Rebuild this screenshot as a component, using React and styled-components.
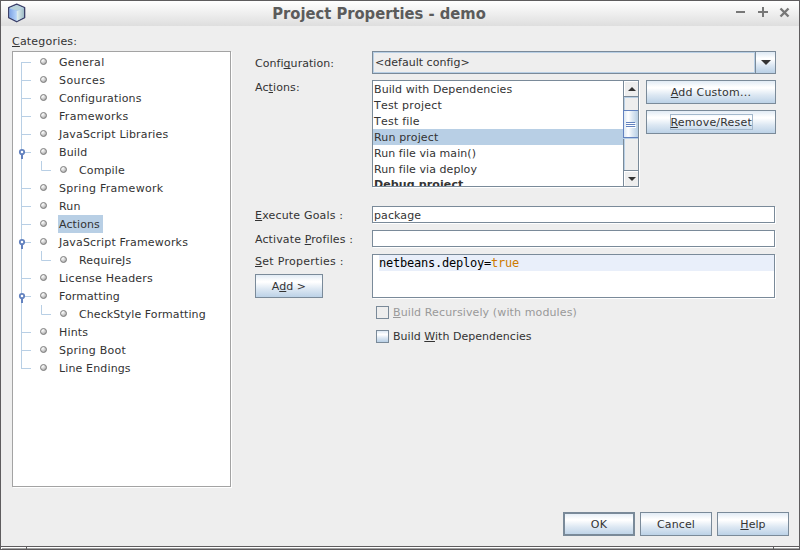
import React from "react";
import styled, { createGlobalStyle, css } from "styled-components";

const steel = "#7a8a99";
const sky = "#b8cfe5";
const oceanGradient = "linear-gradient(#dde8f3 0%, #ffffff 30%, #ffffff 34%, #dde8f3 62%, #b8cfe5 100%)";

const GlobalStyle = createGlobalStyle`
  * { box-sizing: border-box; }
  body { margin: 0; background: #eeeeee; }
`;

const Window = styled.div`
  width: 800px;
  height: 550px;
  display: flex;
  flex-direction: column;
  background: #eeeeee;
  color: #333333;
  font: 11px/16px "DejaVu Sans", sans-serif;
  border: solid #5e5c5e;
  border-width: 1px 1px 0;
  overflow: hidden;
  white-space: nowrap;
`;

const TitleBar = styled.header`
  height: 25px;
  flex: none;
  display: grid;
  grid-template-columns: 60px 1fr 63px;
  align-items: center;
  background: linear-gradient(#ffffff, #dedede);
`;

const AppIcon = styled.svg`
  display: block;
  margin: -1px 0 0 6px;
`;

const Title = styled.h1`
  margin: 0 0 0 -39px;
  justify-self: center;
  color: #5b5b5b;
  font: bold 16.4px/22px "DejaVu Sans Condensed", "DejaVu Sans", sans-serif;
  font-stretch: condensed;
`;

const WindowControls = styled.svg`
  display: block;
`;

const Body = styled.main`
  flex: 1;
  display: grid;
  grid-template-columns: 219px 521px;
  column-gap: 24px;
  padding: 8px 0 0 11px;
`;

const Sidebar = styled.section`
  display: flex;
  flex-direction: column;
`;

const Text = styled.span`
  letter-spacing: ${(p) => p.$track ?? 0.2}px;
`;

const Mnemonic = styled.u`
  text-decoration-thickness: 1px;
  text-underline-offset: 1px;
  text-decoration-skip-ink: none;
`;

const TreeBox = styled.div`
  margin-top: 1px;
  height: 436px;
  border: 1px solid #a3a3a3;
  box-shadow: 1px 1px 0 #ffffff;
  background: #ffffff;
  padding-top: 1px;
`;

const TreeRow = styled.div`
  display: flex;
  height: 18px;
`;

const Branch = styled.svg`
  display: block;
  flex: none;
`;

const TreeLabel = styled.span`
  height: 18px;
  line-height: 17px;
  padding: 1px 3px 0 1px;
  letter-spacing: ${(p) => p.$track - 0.04}px;
  background: ${(p) => (p.$selected ? sky : "transparent")};
`;

const Form = styled.section`
  display: flex;
  flex-direction: column;
  padding-top: 17px;
`;

const FormRow = styled.div`
  display: grid;
  grid-template-columns: 117px 1fr;
  align-items: start;
  height: ${(p) => p.$height}px;
`;

const FieldLabel = styled.label`
  padding-top: ${(p) => p.$drop ?? 0}px;
  letter-spacing: ${(p) => p.$track}px;
`;

const LabelStack = styled.div`
  display: flex;
  flex-direction: column;
  align-items: flex-start;
`;

const Combo = styled.div`
  width: 404px;
  height: 23px;
  display: flex;
  border: 1px solid ${steel};
`;

const ComboValue = styled.div`
  flex: 1;
  border: 1px solid ${sky};
  padding-left: 1px;
  line-height: 19px;
  letter-spacing: 0.02px;
`;

const ComboArrow = styled.div`
  width: 20px;
  border-left: 1px solid ${steel};
  background: ${oceanGradient};
  display: grid;
  place-items: center;
`;

const ListArea = styled.div`
  display: flex;
  gap: 7px;
`;

const ListBox = styled.div`
  width: 267px;
  height: 107px;
  border: 1px solid ${steel};
  box-shadow: 1px 1px 0 #ffffff;
  background: #ffffff;
  display: flex;
  overflow: hidden;
`;

const ListItems = styled.div`
  flex: 1;
  overflow: hidden;
`;

const ListItem = styled.div`
  height: 16px;
  padding: 1px 0 0 1px;
  letter-spacing: ${(p) => p.$track - 0.03}px;
  ${(p) => p.$selected && css`background: ${sky};`}
  ${(p) => p.$bold && css`font-weight: bold; padding-top: 0;`}
  ${(p) => p.$loose && css`font-kerning: none;`}
`;

const ScrollBar = styled.div`
  width: 15px;
  border-left: 1px solid ${steel};
  display: flex;
  flex-direction: column;
`;

const ScrollButton = styled.div`
  height: 15px;
  background: #eeeeee;
  border: solid #ffffff;
  border-width: 1px 0 0 1px;
  display: grid;
  place-items: center;
`;

const ScrollTrack = styled.div`
  height: 75px;
  border: solid ${steel};
  border-width: 1px 0;
  background: #eeeeee;
  box-shadow: inset 1px 1px 0 ${sky};
  padding-top: 13px;
`;

const ScrollThumb = styled.div`
  height: 28px;
  border: solid #6382bf;
  border-width: 1px 0 1px 1px;
  margin-left: -1px;
  background: linear-gradient(90deg, #dde8f3, #ffffff 30%, #dde8f3 60%, #b8cfe5);
  display: grid;
  place-items: center;
  box-shadow: 0 1px 0 ${sky};
`;

const ButtonColumn = styled.div`
  display: flex;
  flex-direction: column;
  gap: 6px;
`;

const Button = styled.button`
  width: ${(p) => p.$width}px;
  height: 24px;
  margin: ${(p) => p.$margin ?? 0};
  padding: ${(p) => (p.$flush ? 0 : 1)}px 0 0;
  border: ${(p) => (p.$primary ? 2 : 1)}px solid ${steel};
  background: ${oceanGradient};
  background-origin: border-box;
  color: #333333;
  font: inherit;
  letter-spacing: ${(p) => p.$track ?? 0.2}px;
  display: flex;
  align-items: center;
  justify-content: center;
`;

const FocusRing = styled.span`
  height: 16px;
  width: 83px;
  border: 1px solid #a3b8cc;
  line-height: 15px;
`;

const Input = styled.div`
  width: 403px;
  height: 17px;
  border: 1px solid ${steel};
  box-shadow: 1px 1px 0 #ffffff;
  background: #ffffff;
  padding-left: 1px;
  line-height: 17px;
  letter-spacing: 0.1px;
`;

const Editor = styled.div`
  width: 403px;
  height: 44px;
  border: 1px solid ${steel};
  box-shadow: 1px 1px 0 #ffffff;
  background: #ffffff;
  padding-left: 6px;
`;

const CodeLine = styled.div`
  height: 16px;
  background: #e9effa;
  color: #000000;
  font: 12px/16px "DejaVu Sans Mono", monospace;
  letter-spacing: -0.225px;
`;

const Value = styled.span`
  color: #ce7b00;
`;

const CheckRow = styled.label`
  display: flex;
  align-items: center;
  gap: 4px;
  height: 24px;
  padding-left: 121px;
  color: ${(p) => (p.$disabled ? "#999999" : "#333333")};
  letter-spacing: ${(p) => p.$track}px;
`;

const CheckText = styled.span`
  padding-top: 2px;
`;

const CheckBox = styled.span`
  width: 13px;
  height: 13px;
  border: 1px solid ${steel};
  background: ${(p) => (p.$disabled ? "#eeeeee" : oceanGradient)};
`;

const Footer = styled.footer`
  height: 34px;
  flex: none;
  display: flex;
  justify-content: flex-end;
  gap: 5px;
  padding-right: 10px;
`;

const ResizeEdge = styled.div`
  flex: none;
  height: 4px;
  display: grid;
  grid-template-columns: 25px 747px 1fr;
  border: solid #5e5c5e;
  border-width: 1px 0;
  background: linear-gradient(#ffffff 50%, #a2a2a2 50%);
`;

const EdgeSection = styled.span`
  border-left: 1px solid ${(p) => (p.$first ? "#ffffff" : "#5e5c5e")};
`;

const categories = [
  { name: "General", track: 0.35, first: true },
  { name: "Sources", track: 0.45 },
  { name: "Configurations", track: 0.2 },
  { name: "Frameworks", track: 0.33 },
  { name: "JavaScript Libraries", track: 0.2 },
  { name: "Build", track: 0.2, open: true },
  { name: "Compile", track: 0.16, child: true },
  { name: "Spring Framework", track: 0.32 },
  { name: "Run", track: 0.25 },
  { name: "Actions", track: 0.15, selected: true },
  { name: "JavaScript Frameworks", track: 0.22, open: true },
  { name: "RequireJs", track: 0.2, child: true },
  { name: "License Headers", track: 0.26 },
  { name: "Formatting", track: 0.12, open: true },
  { name: "CheckStyle Formatting", track: 0.12, child: true },
  { name: "Hints", track: 0.2 },
  { name: "Spring Boot", track: 0.3 },
  { name: "Line Endings", track: 0.18, last: true },
];

const actions = [
  { name: "Build with Dependencies", track: 0.12 },
  { name: "Test project", track: 0.24, loose: true },
  { name: "Test file", track: 0.26, loose: true },
  { name: "Run project", track: 0.18, selected: true },
  { name: "Run file via main()", track: 0.1 },
  { name: "Run file via deploy", track: 0.1 },
  { name: "Debug project", track: 0.15, bold: true },
];

function Connector({ item }) {
  const x = item.child ? 50.5 : 30.5;
  return (
    <Branch width={item.child ? 65 : 45} height="18" viewBox={`0 0 ${item.child ? 65 : 45} 18`}>
      <g stroke={sky} fill="none">
        <path d={`M8.5 ${item.first ? 9 : 0}V${item.last ? 10 : 18}`} />
        {item.child ? <path d="M28.5 0V9.5H38" /> : <path d="M9 9.5H18" />}
      </g>
      {item.open && (
        <g>
          <path d="M9 11V16" stroke="#6382bf" strokeWidth="2" />
          <circle cx="9" cy="9" r="2.2" fill="#ffffff" stroke="#6382bf" strokeWidth="1.8" />
        </g>
      )}
      <circle cx={x} cy="8.5" r="3" fill="url(#pearl)" stroke="#777777" strokeWidth="0.9" />
    </Branch>
  );
}

function ArrowDown({ width = 9 }) {
  return (
    <svg width={width} height={Math.ceil(width / 2)} viewBox="0 0 10 5" preserveAspectRatio="none">
      <path d="M0 0H10L5 5Z" fill="#333333" />
    </svg>
  );
}

function CubeIcon() {
  return (
    <AppIcon width="20" height="20" viewBox="0 0 20 20">
      <path d="M9.7 1.2L17.6 4.6V14.7L9.7 18.7L1.7 14.7V4.6Z" fill="#a8c6ef" stroke="#3b3f68" strokeWidth="1.4" strokeLinejoin="round" />
      <path d="M9.7 2L17 5L10 7.4L2.6 5.1Z" fill="#b9d3da" />
      <path d="M2.5 5.4L9.8 8V18L2.5 14.3Z" fill="url(#cubeLeft)" />
      <path d="M9.8 8L16.9 5.3V14.2L9.8 18Z" fill="url(#cubeRight)" />
    </AppIcon>
  );
}

export default function App() {
  return (
    <Window>
      <GlobalStyle />
      <TitleBar>
        <CubeIcon />
        <Title>Project Properties - demo</Title>
        <WindowControls width="63" height="25" viewBox="0 0 63 25">
          <g stroke="#777777" strokeWidth="2" fill="none">
            <path d="M0 11H9M22 11H32M27 6V16" />
            <path d="M44.5 7.5L52.5 15.5M52.5 7.5L44.5 15.5" strokeWidth="2.4" />
          </g>
        </WindowControls>
      </TitleBar>
      <Body>
        <Sidebar>
          <Text $track={0.2}><Mnemonic>C</Mnemonic>ategories:</Text>
          <TreeBox>
            <svg width="0" height="0" display="block">
              <defs>
                <radialGradient id="pearl" cx="35%" cy="30%" r="75%">
                  <stop offset="0" stopColor="#ffffff" />
                  <stop offset="0.5" stopColor="#d4d4d4" />
                  <stop offset="1" stopColor="#a0a0a0" />
                </radialGradient>
                <linearGradient id="cubeLeft">
                  <stop offset="0" stopColor="#7fa5e6" />
                  <stop offset="1" stopColor="#b9d6fa" />
                </linearGradient>
                <linearGradient id="cubeRight">
                  <stop offset="0" stopColor="#e3f0f0" />
                  <stop offset="1" stopColor="#9fbcc6" />
                </linearGradient>
              </defs>
            </svg>
            {categories.map((item) => (
              <TreeRow key={item.name}>
                <Connector item={item} />
                <TreeLabel $track={item.track} $selected={item.selected}>{item.name}</TreeLabel>
              </TreeRow>
            ))}
          </TreeBox>
        </Sidebar>
        <Form>
          <FormRow $height={29}>
            <FieldLabel $drop={5} $track={0.05}>Confi<Mnemonic>g</Mnemonic>uration:</FieldLabel>
            <Combo>
              <ComboValue>&lt;default config&gt;</ComboValue>
              <ComboArrow><ArrowDown width={10} /></ComboArrow>
            </Combo>
          </FormRow>
          <FormRow $height={126}>
            <FieldLabel $track={0.1}>Ac<Mnemonic>t</Mnemonic>ions:</FieldLabel>
            <ListArea>
              <ListBox>
                <ListItems>
                  {actions.map((a) => (
                    <ListItem key={a.name} $track={a.track} $selected={a.selected} $bold={a.bold} $loose={a.loose}>{a.name}</ListItem>
                  ))}
                </ListItems>
                <ScrollBar>
                  <ScrollButton>
                    <svg width="8" height="4" viewBox="0 0 8 4"><path d="M0 4H8L4 0Z" fill="#333333" /></svg>
                  </ScrollButton>
                  <ScrollTrack>
                    <ScrollThumb>
                      <svg width="10" height="7" viewBox="0 0 10 7">
                        <path d="M0 1.5H9M0 3.5H9M0 5.5H9" stroke="#6382bf" />
                        <path d="M1 2.5H10M1 4.5H10M1 6.5H10" stroke="#ffffff" />
                      </svg>
                    </ScrollThumb>
                  </ScrollTrack>
                  <ScrollButton><ArrowDown width={8} /></ScrollButton>
                </ScrollBar>
              </ListBox>
              <ButtonColumn>
                <Button $width={130} $track={0.23}><span><Mnemonic>A</Mnemonic>dd Custom...</span></Button>
                <Button $width={130} $track={0.2} $flush><FocusRing><Mnemonic>R</Mnemonic>emove/Reset</FocusRing></Button>
              </ButtonColumn>
            </ListArea>
          </FormRow>
          <FormRow $height={24}>
            <FieldLabel $drop={2} $track={0.18}><Mnemonic>E</Mnemonic>xecute Goals :</FieldLabel>
            <Input>package</Input>
          </FormRow>
          <FormRow $height={24}>
            <FieldLabel $drop={2} $track={0.12}>Activate <Mnemonic>P</Mnemonic>rofiles :</FieldLabel>
            <Input />
          </FormRow>
          <FormRow $height={46}>
            <LabelStack>
              <FieldLabel $track={0.28}><Mnemonic>S</Mnemonic>et Properties :</FieldLabel>
              <Button $width={68} $margin="4px 0 0" $track={0.05}><span>A<Mnemonic>d</Mnemonic>d &gt;</span></Button>
            </LabelStack>
            <Editor>
              <CodeLine>netbeans.deploy=<Value>true</Value></CodeLine>
            </Editor>
          </FormRow>
          <CheckRow $disabled $track={0.12}>
            <CheckBox $disabled />
            <CheckText><Mnemonic>B</Mnemonic>uild Recursively (with modules)</CheckText>
          </CheckRow>
          <CheckRow $track={0.03}>
            <CheckBox />
            <CheckText>Build <Mnemonic>W</Mnemonic>ith Dependencies</CheckText>
          </CheckRow>
        </Form>
      </Body>
      <Footer>
        <Button $width={72} $primary $track={0.3}>OK</Button>
        <Button $width={72} $track={0.15}>Cancel</Button>
        <Button $width={72} $track={0.05}><span><Mnemonic>H</Mnemonic>elp</span></Button>
      </Footer>
      <ResizeEdge>
        <EdgeSection $first />
        <EdgeSection />
        <EdgeSection />
      </ResizeEdge>
    </Window>
  );
}
